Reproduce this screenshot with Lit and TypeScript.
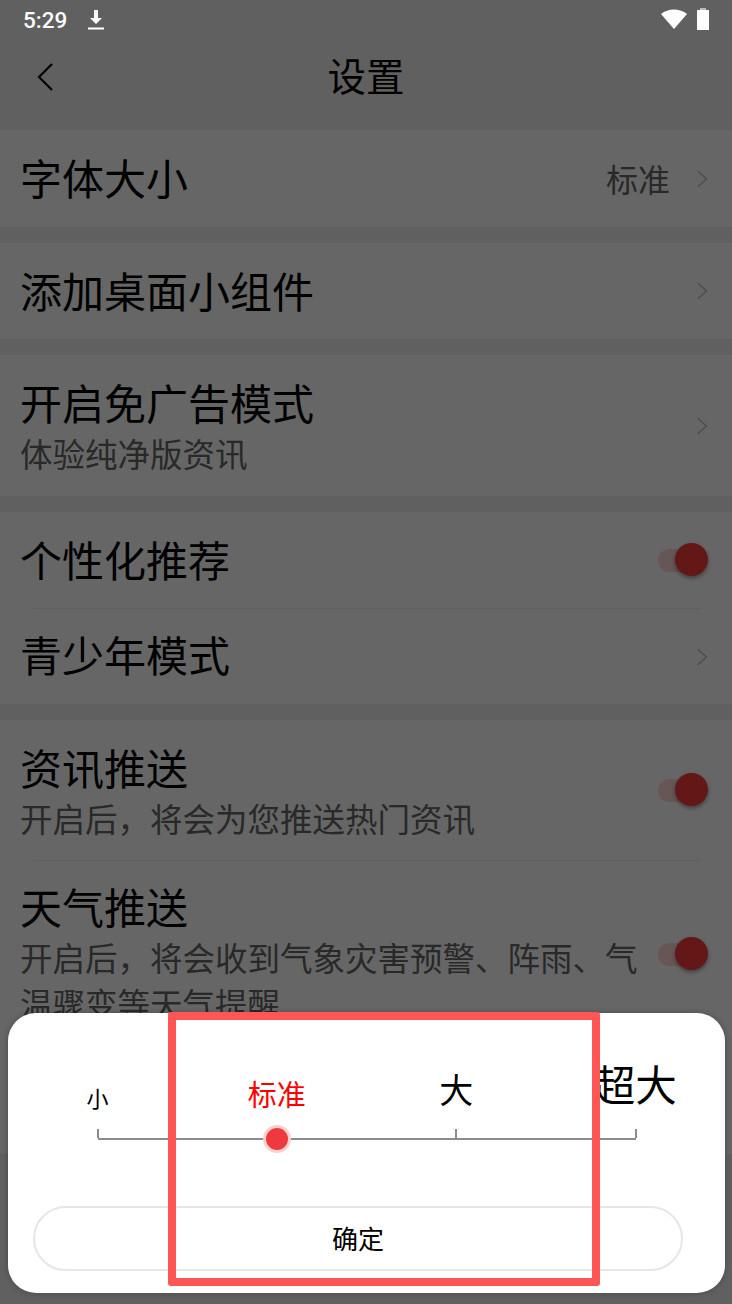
import { LitElement, html, css } from "lit";
import { customElement } from "lit/decorators.js";

const chevron = html`<svg class="chev" viewBox="0 0 12 18" width="12" height="18"><path d="M1.5 1l9 8-9 8" fill="none" stroke="#bdbdbd" stroke-width="1.3"/></svg>`;
const toggle = html`<div class="toggle"><span class="rail"></span><span class="knob"></span></div>`;

@customElement("app-root")
export class AppRoot extends LitElement {
  static styles = css`
    :host { display: block; position: relative; width: 732px; height: 1304px; overflow: hidden; background: #f0f0f0;
      font-family: "Noto Sans CJK SC", "Noto Sans", sans-serif; color: #000; }
    .status { position: relative; z-index: 3; height: 40px; display: flex; align-items: center; padding: 0 23px 0 23px; color: #fff; font-family: Roboto, sans-serif; font-size: 22.5px; font-weight: 500; }
    .status .dl { margin-left: 21px; margin-top: -1px; }
    .status .sp { flex: 1; }
    .status .wifi { margin-right: 10px; margin-top: -2px; }
    .status .batt { margin-top: -3px; }
    .head { height: 90px; display: flex; align-items: center; justify-content: center; position: relative; font-size: 38.5px; padding-bottom: 22px; box-sizing: border-box; }
    .head svg { position: absolute; left: 36px; top: 22px; }
    .list { display: flex; flex-direction: column; gap: 16px; }
    .group { background: #fff; padding-left: 20px; padding-right: 24px; }
    .row { display: flex; align-items: center; box-sizing: border-box; height: 96px; }
    .row.first { height: 97px; }
    .row.short { height: 95px; }
    .row.sub { height: 140px; }
    .row.ad { height: 141px; }
    .rule { height: 1px; margin: 0 8px 0 13px; background: #eeeeee; }
    .main { flex: 1; min-width: 0; }
    .title { font-size: 42px; line-height: 56px; }
    .plain { padding-bottom: 3px; }
    .up { padding-bottom: 6px; }
    .sub .main { align-self: flex-start; padding-top: 19px; }
    .last .main { padding-top: 17px; }
    .desc { font-size: 32.5px; line-height: 46px; color: #666; }
    .val { font-size: 32px; color: #666; margin-right: 26px; padding-bottom: 2px; }
    .chev { flex: none; }
    .toggle { position: relative; width: 50px; height: 34px; flex: none; }
    .rail { position: absolute; left: 0; right: 6px; top: 5.5px; height: 23px; border-radius: 12px; background: #ffd8d8; }
    .knob { position: absolute; right: 0; top: 0; width: 33px; height: 33px; border-radius: 50%; background: #f83a3a; box-shadow: 0 2px 4px rgba(0,0,0,.4); }
    .last { height: 293px; align-items: flex-start; }
    .last .toggle { margin-top: 76px; }
    .scrim { position: absolute; inset: 0; background: rgba(0,0,0,.6); z-index: 1; }
    .sheet { position: absolute; z-index: 2; left: 8px; top: 1013px; width: 717px; height: 280px; background: #fff; border-radius: 28px; box-shadow: 0 0 6px rgba(0,0,0,.25); }
    .labels { display: grid; grid-template-columns: repeat(4, 1fr); align-items: end; height: 98px; }
    .labels span { justify-self: center; white-space: nowrap; line-height: 1.2; }
    .s { font-size: 22px; margin-bottom: 1px; }
    .m { font-size: 29px; color: #f00; }
    .l { font-size: 34px; margin-bottom: 1px; }
    .x { font-size: 41.5px; margin-bottom: 2px; }
    .track { position: relative; margin: 19px 89.5px 0; border-bottom: 2px solid #8c8c8c; height: 8px; }
    .tick { position: absolute; bottom: 0; width: 2px; height: 9px; background: #8c8c8c; margin-left: -1px; }
    .t0 { left: 0; }
    .t2 { left: 66.67%; }
    .t3 { left: 100%; }
    .thumb { position: absolute; left: 33.33%; bottom: -15px; width: 22px; height: 22px; margin-left: -14px; border-radius: 50%; background: #ee3a3e; border: 3px solid #fbd0d0; }
    .btn { margin: 66px 42px 0 25px; height: 65px; box-sizing: border-box; border: 2px solid #e6e6e6; border-radius: 33px; display: flex; align-items: center; justify-content: center; font-size: 26px; padding-bottom: 3px; }
    .mark { position: absolute; z-index: 4; left: 168px; top: 1012px; width: 432px; height: 274px; box-sizing: border-box; border: 8px solid #ff5555; border-radius: 3px; }
  `;
  render() {
    return html`
      <div class="status"><span>5:29</span>
        <svg class="dl" width="16" height="22" viewBox="0 0 16 22"><path d="M6 1h4v8h4l-6 6-6-6h4z" fill="#fff"/><rect x="0" y="18.5" width="16" height="2" fill="#fff"/></svg>
        <span class="sp"></span>
        <svg class="wifi" width="26" height="20" viewBox="0 0 26 20"><path d="M0 5C7-1 19-1 26 5L13 20z" fill="#fff"/></svg>
        <svg class="batt" width="12" height="22" viewBox="0 0 12 22"><rect x="3" y="0" width="6" height="3" fill="#bbb"/><rect x="0" y="2" width="12" height="20" fill="#fff"/></svg>
      </div>
      <div class="head">
        <svg width="20" height="30" viewBox="0 0 20 30"><path d="M16 2L3 15l13 13" fill="none" stroke="#000" stroke-width="2.2"/></svg>
        设置
      </div>
      <div class="list">
        <div class="group"><div class="row first"><div class="main title plain">字体大小</div><span class="val">标准</span>${chevron}</div></div>
        <div class="group"><div class="row"><div class="main title plain">添加桌面小组件</div>${chevron}</div></div>
        <div class="group"><div class="row sub ad"><div class="main"><div class="title">开启免广告模式</div><div class="desc">体验纯净版资讯</div></div>${chevron}</div></div>
        <div class="group">
          <div class="row"><div class="main title plain">个性化推荐</div>${toggle}</div>
          <div class="rule"></div>
          <div class="row short"><div class="main title up">青少年模式</div>${chevron}</div>
        </div>
        <div class="group">
          <div class="row sub"><div class="main"><div class="title">资讯推送</div><div class="desc">开启后，将会为您推送热门资讯</div></div>${toggle}</div>
          <div class="rule"></div>
          <div class="row last"><div class="main"><div class="title">天气推送</div><div class="desc">开启后，将会收到气象灾害预警、阵雨、气温骤变等天气提醒</div></div>${toggle}</div>
        </div>
      </div>
      <div class="scrim"></div>
      <div class="sheet">
        <div class="labels"><span class="s">小</span><span class="m">标准</span><span class="l">大</span><span class="x">超大</span></div>
        <div class="track">
          <i class="tick t0"></i><i class="tick t2"></i><i class="tick t3"></i>
          <div class="thumb"></div>
        </div>
        <div class="btn">确定</div>
      </div>
      <div class="mark"></div>
    `;
  }
}
